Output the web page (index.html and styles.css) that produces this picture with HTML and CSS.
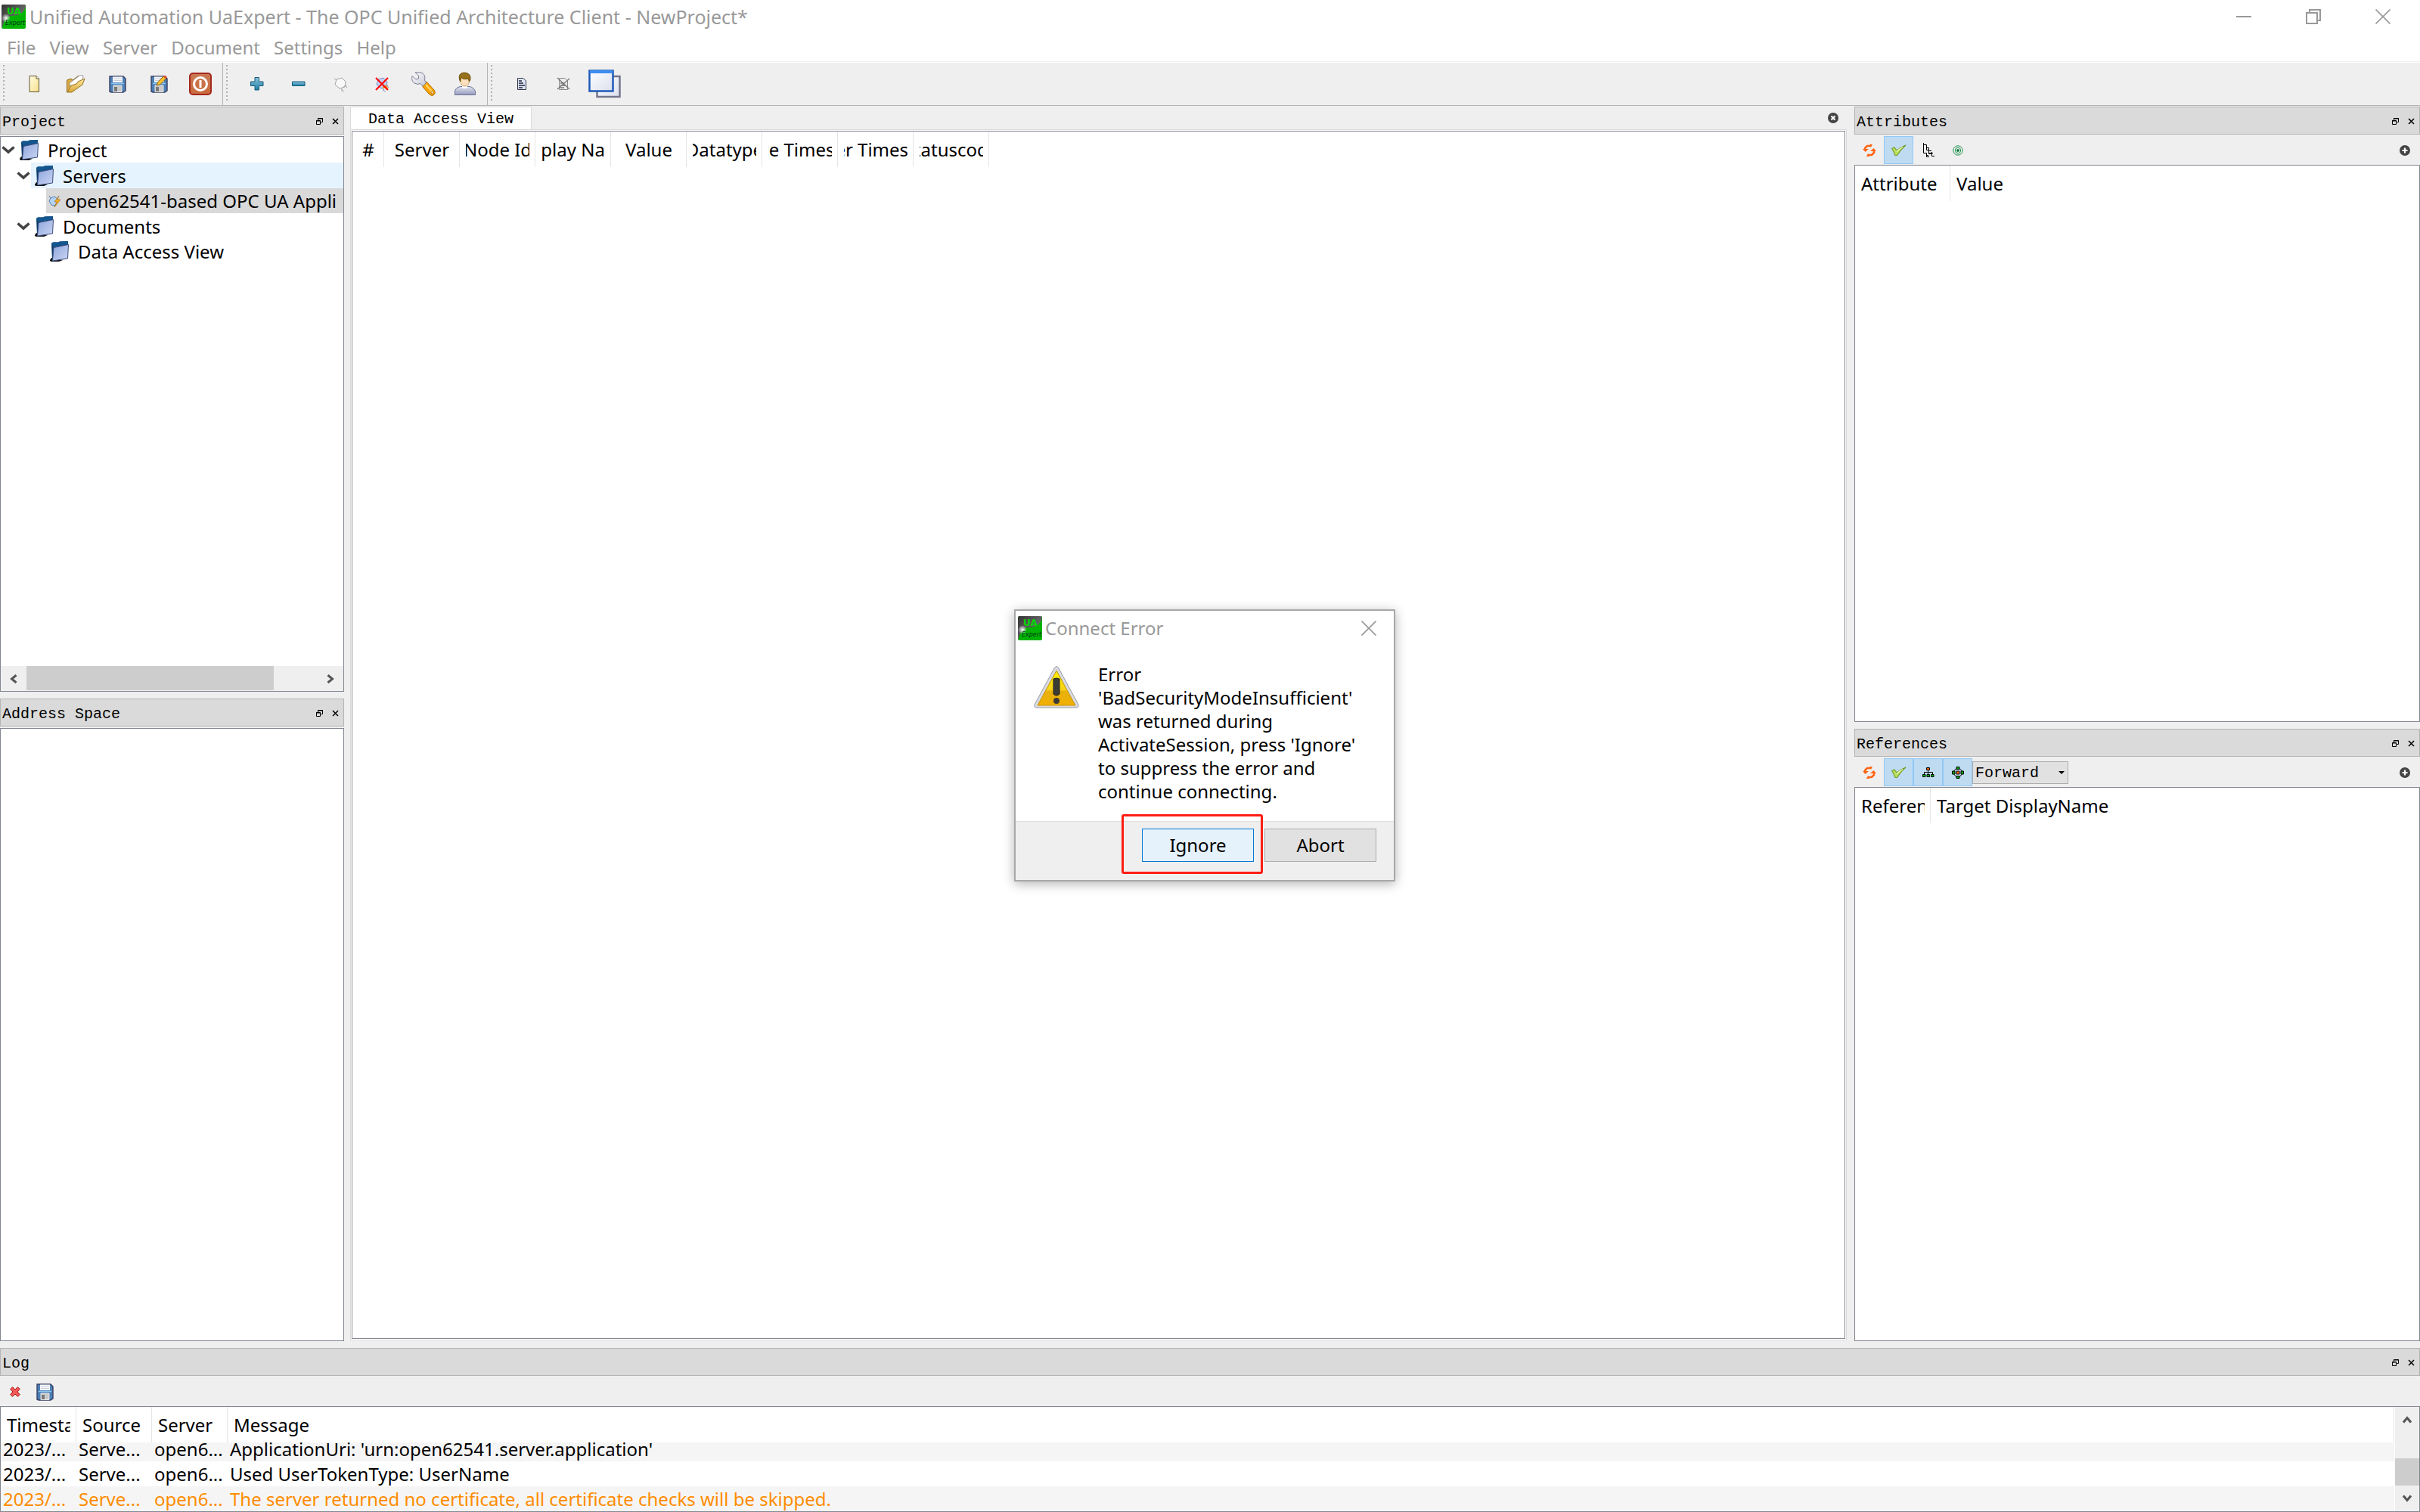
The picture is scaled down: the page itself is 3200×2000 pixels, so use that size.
FILE: index.html
```html
<!DOCTYPE html>
<html lang="en">
<head>
<meta charset="utf-8">
<title>Unified Automation UaExpert - The OPC Unified Architecture Client - NewProject*</title>
<link rel="stylesheet" href="styles.css">
</head>
<body>
<svg class="defs" aria-hidden="true">
  <defs>
    <linearGradient id="g-folder" x1="0" y1="0" x2="1" y2="1"><stop offset="0" stop-color="#8ea5dd"/><stop offset="1" stop-color="#ccd6f2"/></linearGradient>
    <linearGradient id="g-grey" x1="0" y1="0" x2="1" y2="1"><stop offset="0" stop-color="#333"/><stop offset="1" stop-color="#8a8a8a"/></linearGradient>
    <radialGradient id="g-flare"><stop offset="0" stop-color="#fff"/><stop offset="1" stop-color="#fff" stop-opacity="0"/></radialGradient>
    <linearGradient id="g-page" x1="0" y1="0" x2="1" y2="1"><stop offset="0" stop-color="#fffbe0"/><stop offset="1" stop-color="#f8e08c"/></linearGradient>
    <linearGradient id="g-gold" x1="0" y1="0" x2="0" y2="1"><stop offset="0" stop-color="#fbe9a0"/><stop offset="1" stop-color="#d9a63a"/></linearGradient>
    <linearGradient id="g-blue" x1="0" y1="0" x2="0" y2="1"><stop offset="0" stop-color="#8cc3dc"/><stop offset="1" stop-color="#1f7fa6"/></linearGradient>
    <linearGradient id="g-power" x1="0" y1="0" x2="0" y2="1"><stop offset="0" stop-color="#cb7a55"/><stop offset="1" stop-color="#c96a3c"/></linearGradient>
    <linearGradient id="g-steel" x1="0" y1="0" x2="1" y2="1"><stop offset="0" stop-color="#fff"/><stop offset="1" stop-color="#c4c6d6"/></linearGradient>
    <linearGradient id="g-body" x1="0" y1="0" x2="0" y2="1"><stop offset="0" stop-color="#e4e6f2"/><stop offset="1" stop-color="#9499bd"/></linearGradient>
    <linearGradient id="g-warn" x1="0" y1="0" x2="0" y2="1"><stop offset="0" stop-color="#fff100"/><stop offset=".55" stop-color="#f6d21c"/><stop offset=".6" stop-color="#e9b10e"/><stop offset="1" stop-color="#f0b000"/></linearGradient>
    <linearGradient id="g-win" x1="0" y1="0" x2="1" y2="1"><stop offset="0" stop-color="#fff"/><stop offset="1" stop-color="#dcdfee"/></linearGradient>
    <symbol id="i-app" viewBox="0 0 32 32">
      <rect width="32" height="32" rx="2" fill="#00b400"/>
      <path d="M0 2Q0 0 2 0H30Q32 0 32 2C30 11 24 15 12 15C6 17 3 22 1 30L0 31Z" fill="url(#g-grey)"/>
      <circle cx="6" cy="18" r="6" fill="url(#g-flare)"/>
      <text x="7" y="13" class="logo-ua">UA</text>
      <text x="5" y="27" class="logo-ex">Expert</text>
    </symbol>
    <symbol id="i-folder" viewBox="0 0 26 28">
      <path d="M2 22L17 25L12 27H2Q-1 26 0 25Z" fill="#111"/>
      <path d="M2 3L4 1.500H11L13 .500L24 0V5L22 23L3 25Z" fill="#0b3c6b"/>
      <path d="M2 3L4 1.500H11L13 .500L24 0V4L5 8Z" fill="#14568f"/>
      <path d="M5 8.500L24.500 4.500L23.500 23L3.500 26Z" fill="url(#g-folder)" stroke="#3c4f80" stroke-width="1"/>
    </symbol>
    <symbol id="i-save" viewBox="0 0 32 32">
      <path d="M6 6H24L27 9V25L24 27H8L6 26Z" fill="#4b7fb5" stroke="#3a3f63" stroke-width="1.4"/>
      <path d="M10 6.500H23V14H10Z" fill="#f6f7fa"/><path d="M11 9H22M11 11.500H22" stroke="#c9ccd6"/>
      <path d="M8 15.500H25" stroke="#8cc6ef" stroke-width="1.500"/>
      <path d="M11 18H22V26.500H11Z" fill="#c9c9c9" stroke="#e8e8e8"/><path d="M12 20H16V26H12Z" fill="#777"/>
    </symbol>
    <symbol id="i-plug" viewBox="0 0 32 32">
      <path d="M11 10L18 8L23 13L22 20L15 22L9 17Z"/><path d="M11 11L8 9M20 20L24 18M17 22L19 24M23 18L25 21M17 24L21 26"/>
    </symbol>
    <symbol id="i-float" viewBox="0 0 9 9"><path d="M2.500 3V.500H8.500V5.500H6.500M2 1H9" fill="none" stroke="#000"/><path d="M.500 3.500H5.500V8.500H.500ZM0 4H6" fill="none" stroke="#000"/></symbol>
    <symbol id="i-x" viewBox="0 0 9 9"><path d="M1 1L8 8M8 1L1 8" stroke="#000" stroke-width="1.500"/></symbol>
    <symbol id="i-close" viewBox="0 0 20 20"><path d="M.500 .500L19.500 19.500M19.500 .500L.500 19.500" stroke="#999" stroke-width="1.600"/></symbol>
    <symbol id="i-refresh" viewBox="0 0 18 16"><path d="M3 7V5L6 2H11M15 9V11L12 14H7" fill="none" stroke="#ff6414" stroke-width="2.600"/><path d="M0 6H8L3.500 10ZM18 9H10L14.500 5Z" fill="#ff6414"/><path d="M9 0H13L11 4ZM9 16H5L7 12Z" fill="#ff6414"/></symbol>
    <symbol id="i-check" viewBox="0 0 20 16"><path d="M.700 5.500L4 4L7 8Q12 4 19 1Q12 7 7.500 14.500H5Q3 9 .700 5.500Z" fill="#bce05a" stroke="#749c2c" stroke-width="1.200"/><path d="M7 9.500Q11 5.500 15 3.500" stroke="#eefac0" stroke-width="1.300" fill="none"/></symbol>
    <symbol id="i-plus" viewBox="0 0 14 14"><circle cx="7" cy="7" r="7" fill="#444"/><path d="M7 3.500V10.500M3.500 7H10.500" stroke="#fff" stroke-width="2.200"/></symbol>
    <symbol id="i-down" viewBox="0 0 18 12"><path d="M1.500 2.500L9 9L16.500 2.500" fill="none" stroke="#444" stroke-width="3.600"/></symbol>
  </defs>
</svg>

<div class="app">
  <header class="titlebar">
    <svg class="app-icon"><use href="#i-app"/></svg>
    <h1 class="title">Unified Automation UaExpert - The OPC Unified Architecture Client - NewProject*</h1>
    <div class="window-buttons">
      <button type="button" aria-label="Minimize"><svg width="20" height="20" viewBox="0 0 20 20"><path d="M0 10H20" stroke="#999" stroke-width="2"/></svg></button>
      <button type="button" aria-label="Restore"><svg width="20" height="20" viewBox="0 0 20 20"><path d="M1 5H15V19H1ZM5 5V1H19V15H15" fill="none" stroke="#999" stroke-width="2"/></svg></button>
      <button type="button" aria-label="Close"><svg width="20" height="20"><use href="#i-close"/></svg></button>
    </div>
  </header>

  <nav class="menubar">
    <button type="button">File</button><button type="button">View</button><button type="button">Server</button><button type="button">Document</button><button type="button">Settings</button><button type="button">Help</button>
  </nav>

  <div class="toolbar">
    <div class="tool-group">
      <button type="button" aria-label="New"><svg class="i32" viewBox="0 0 32 32"><path d="M10 5.500H19L22.500 9V26.500H10Z" fill="url(#g-page)" stroke="#5f5630"/><path d="M19 5.500V9H22.500" fill="#fff" stroke="#5f5630"/></svg></button>
      <button type="button" aria-label="Open"><svg class="i32" viewBox="0 0 32 32"><path d="M4.500 27V11L10 9L12 11L20 5L24 9V17Z" fill="#d8ab45" stroke="#8c6b20"/><path d="M8 15L21 5H26L25 14L9 22Z" fill="#fff" stroke="#999"/><path d="M5 27L10 18L17 16L19 13L28 9L25 17L11 27Z" fill="url(#g-gold)" stroke="#9a7421"/></svg></button>
      <button type="button" aria-label="Save"><svg class="i32"><use href="#i-save"/></svg></button>
      <button type="button" aria-label="Save as"><svg class="i32" viewBox="0 0 32 32"><use href="#i-save" width="32" height="32"/><path d="M13 18L14.500 14L22 6L25.500 9L17.500 17Z" fill="#fbc02d" stroke="#8a5a12"/><path d="M22 6L24 4.500L27 7L25.500 9Z" fill="#e0533d"/></svg></button>
      <button type="button" aria-label="Exit"><svg class="i32" viewBox="0 0 32 32"><rect x="2" y="2" width="28" height="28" rx="4" fill="url(#g-power)" stroke="#a5281b" stroke-width="2"/><circle cx="16" cy="16" r="8.500" fill="none" stroke="#fff" stroke-width="3"/><path d="M16 11V21" stroke="#fff" stroke-width="3"/></svg></button>
    </div>
    <div class="tool-group">
      <button type="button" aria-label="Add server"><svg class="i32" viewBox="0 0 32 32"><path d="M13 7.500H18.500V13H24V18.500H18.500V24H13V18.500H7.500V13H13Z" fill="url(#g-blue)" stroke="#145a7c" stroke-linejoin="round"/></svg></button>
      <button type="button" aria-label="Remove server"><svg class="i32" viewBox="0 0 32 32"><path d="M7.500 13H24V18.500H7.500Z" fill="url(#g-blue)" stroke="#145a7c" stroke-linejoin="round"/></svg></button>
      <button type="button" aria-label="Connect server"><svg class="i32 plug-off"><use href="#i-plug"/></svg></button>
      <button type="button" aria-label="Disconnect server"><svg class="i32" viewBox="0 0 32 32"><g class="plug-on"><use href="#i-plug" width="32" height="32"/></g><path d="M17 21L21 19L23 23" fill="none" stroke="#f5a030" stroke-width="3"/><path d="M8 8L24 24M24 8L8 24" stroke="#f00" stroke-width="2"/></svg></button>
      <button type="button" aria-label="Properties"><svg class="i32" viewBox="0 0 32 32"><path d="M15.500 15L20 13L30 24Q33 28 29 31Q26 32.500 23 29L15 20Z" fill="#f8a400" stroke="#b06c00"/><path d="M19 17L28 27" stroke="#ffd56b" stroke-width="2"/><path d="M9 .700L5 .700L9.500 5V9L6 10L1 5.500Q-.500 12 4 15Q8 17.500 12 15.500L15 19L19.500 14.500L17.500 11Q19 5 15 2Q12 0 9 .700Z" fill="url(#g-steel)" stroke="#7d8094"/><circle cx="27.500" cy="27.500" r="1.500" fill="#fff" stroke="#b06c00"/></svg></button>
      <button type="button" aria-label="Change user"><svg class="i32" viewBox="0 0 32 32"><path d="M2.500 30.500V26Q3 21 10 19.500H22Q28 21 29.500 26V30.500Z" fill="url(#g-body)" stroke="#6c7094"/><path d="M12 17H19V21Q15.500 23 12 21Z" fill="#fff"/><path d="M10 8V13Q11 19 15.500 19Q20 19 21.500 13V8Z" fill="#fde0bd" stroke="#cda06c"/><path d="M8.500 10Q6.500 1.500 15 1Q24 1.500 23 10L21.500 13L20 9Q13 11 11 7L9.500 13Z" fill="#96701a" stroke="#6e4f0d"/></svg></button>
    </div>
    <div class="tool-group">
      <button type="button" aria-label="New document"><svg class="i32" viewBox="0 0 32 32"><path d="M10.500 8.500H18L21.500 12V23.500H10.500Z" fill="#dce8fa" stroke="#334"/><path d="M12 12H16M12 15H18M12 18H20M12 21H17" stroke="#223" stroke-width="1.300"/></svg></button>
      <button type="button" aria-label="Close document"><svg class="i32" viewBox="0 0 32 32"><path d="M10.500 8.500H18L21.500 12V23.500H10.500Z" fill="#eee" stroke="#888"/><path d="M12 15H18M12 18H20M12 21H17M8 8L24 23M24 9L8 23" stroke="#777" stroke-width="1.300"/></svg></button>
      <button type="button" aria-label="Windows"><svg width="44" height="38" viewBox="0 0 44 38"><rect x="11.500" y="9" width="30" height="27" fill="url(#g-win)" stroke="#73768c" stroke-width="2.500"/><rect x="1.500" y="1.500" width="31" height="27" fill="url(#g-win)" stroke="#1d5bb8" stroke-width="2.500"/><path d="M2 3H32" stroke="#3f8df0" stroke-width="4"/></svg></button>
    </div>
  </div>

  <main class="workspace">
    <div class="column">
      <section class="dock dock-project">
        <div class="dock-title"><h2>Project</h2><button type="button" aria-label="Float"><svg><use href="#i-float"/></svg></button><button type="button" aria-label="Close"><svg><use href="#i-x"/></svg></button></div>
        <div class="view tree-view">
          <ul class="tree">
            <li class="lv1"><svg class="chev"><use href="#i-down"/></svg><div class="node"><svg class="folder"><use href="#i-folder"/></svg><span>Project</span></div></li>
            <li class="lv2"><svg class="chev"><use href="#i-down"/></svg><div class="node hover"><svg class="folder"><use href="#i-folder"/></svg><span>Servers</span></div></li>
            <li class="lv3"><div class="node selected"><svg class="server" viewBox="0 0 18 18"><path d="M2 2L4 5L9 3L13 6V11L9 15L5 14L2 9L4 5" fill="#b5d4f5" stroke="#5580b8"/><path d="M15 2L9 10H12L9 17L17 7H13Z" fill="#ffb01f" stroke="#8a5a20" stroke-width=".600"/></svg><span>open62541-based OPC UA Appli</span></div></li>
            <li class="lv2"><svg class="chev"><use href="#i-down"/></svg><div class="node"><svg class="folder"><use href="#i-folder"/></svg><span>Documents</span></div></li>
            <li class="lv3"><div class="node"><svg class="folder"><use href="#i-folder"/></svg><span>Data Access View</span></div></li>
          </ul>
          <div class="hscroll">
            <button type="button" aria-label="Scroll left"><svg width="10" height="12" viewBox="0 0 10 12"><path d="M8.500 1L2.500 6L8.500 11" fill="none" stroke="#555" stroke-width="3"/></svg></button>
            <div class="htrack"><div class="hthumb"></div></div>
            <button type="button" aria-label="Scroll right"><svg width="10" height="12" viewBox="0 0 10 12"><path d="M1.500 1L7.500 6L1.500 11" fill="none" stroke="#555" stroke-width="3"/></svg></button>
          </div>
        </div>
      </section>
      <section class="dock dock-address">
        <div class="dock-title"><h2>Address Space</h2><button type="button" aria-label="Float"><svg><use href="#i-float"/></svg></button><button type="button" aria-label="Close"><svg><use href="#i-x"/></svg></button></div>
        <div class="view"></div>
      </section>
    </div>

    <section class="documents">
      <div class="tabs">
        <button type="button" class="tab">Data Access View</button>
        <button type="button" class="tab-close" aria-label="Close tab"><svg width="14" height="14" viewBox="0 0 14 14"><circle cx="7" cy="7" r="7" fill="#444"/><path d="M4.500 4.500L9.500 9.500M9.500 4.500L4.500 9.500" stroke="#fff" stroke-width="2.200"/></svg></button>
      </div>
      <div class="pane">
        <div class="view">
          <table class="grid grid-data">
            <colgroup><col class="c-num"><col class="c-std"><col class="c-std"><col class="c-std"><col class="c-std"><col class="c-std"><col class="c-std"><col class="c-std"><col class="c-std"><col></colgroup>
            <thead><tr>
              <th><div>#</div></th><th><div>Server</div></th><th><div>Node Id</div></th><th><div>Display Name</div></th><th><div>Value</div></th><th><div>Datatype</div></th><th><div>Source Timestamp</div></th><th><div>Server Timestamp</div></th><th><div>Statuscode</div></th><td></td>
            </tr></thead>
          </table>
        </div>
      </div>
    </section>

    <div class="column">
      <section class="dock dock-attributes">
        <div class="dock-title"><h2>Attributes</h2><button type="button" aria-label="Float"><svg><use href="#i-float"/></svg></button><button type="button" aria-label="Close"><svg><use href="#i-x"/></svg></button></div>
        <div class="subbar">
          <button type="button" aria-label="Refresh"><svg width="18" height="16"><use href="#i-refresh"/></svg></button>
          <button type="button" class="on" aria-label="Auto update"><svg width="20" height="16"><use href="#i-check"/></svg></button>
          <button type="button" aria-label="Expand"><svg width="16" height="20" viewBox="0 0 16 20" fill="none" stroke="#000"><path d="M1.500 0V13.500H5M1.500 2.500H5.500V9.500H9M5.500 6.500H8.500V14.500H12M8.500 10.500H12M5.500 13V18.500H9M12.500 12V17.500H16M5 16.500H8M9 13.500H14"/></svg></button>
          <button type="button" aria-label="Target"><svg width="14" height="14" viewBox="0 0 14 14" fill="none" stroke="#1d9150"><circle cx="7" cy="7" r="6.200"/><circle cx="7" cy="7" r="3.700"/><circle cx="7" cy="7" r="1.500" fill="#0a6b34"/></svg></button>
          <button type="button" class="more" aria-label="Add"><svg width="14" height="14"><use href="#i-plus"/></svg></button>
        </div>
        <div class="view">
          <table class="grid grid-left">
            <colgroup><col class="c-attr"><col></colgroup>
            <thead><tr><th><div>Attribute</div></th><th><div>Value</div></th></tr></thead>
          </table>
        </div>
      </section>
      <section class="dock dock-references">
        <div class="dock-title"><h2>References</h2><button type="button" aria-label="Float"><svg><use href="#i-float"/></svg></button><button type="button" aria-label="Close"><svg><use href="#i-x"/></svg></button></div>
        <div class="subbar">
          <button type="button" aria-label="Refresh"><svg width="18" height="16"><use href="#i-refresh"/></svg></button>
          <button type="button" class="on" aria-label="Auto update"><svg width="20" height="16"><use href="#i-check"/></svg></button>
          <button type="button" class="on" aria-label="Hierarchical"><svg width="16" height="16" viewBox="0 0 16 16" stroke="#000"><path d="M7.500 4V10M2.500 10V7.500H13.500V10" fill="none"/><path d="M5.500 1.500H9.500V4.500H5.500Z" fill="#ff6414"/><path d="M.500 10.500H4V13.500H.500ZM6 10.500H9.500V13.500H6ZM11.500 10.500H15V13.500H11.500Z" fill="#0b0"/></svg></button>
          <button type="button" class="on" aria-label="Non hierarchical"><svg width="16" height="16" viewBox="0 0 16 16" stroke="#000"><circle cx="8" cy="8" r="5.500" fill="none"/><path d="M6 .500H10V3.500H6ZM6 12.500H10V15.500H6ZM.500 6H4V10H.500ZM12 6H15.500V10H12Z" fill="#0a0"/><path d="M6 6H10V10H6Z" fill="#ff6414"/></svg></button>
          <div class="combo"><select aria-label="Direction"><option>Forward</option><option>Inverse</option><option>Both</option></select></div>
          <button type="button" class="more" aria-label="Add"><svg width="14" height="14"><use href="#i-plus"/></svg></button>
        </div>
        <div class="view">
          <table class="grid grid-left">
            <colgroup><col class="c-std"><col></colgroup>
            <thead><tr><th><div>Reference</div></th><th><div>Target DisplayName</div></th></tr></thead>
          </table>
        </div>
      </section>
    </div>
  </main>

  <section class="dock dock-log">
    <div class="dock-title"><h2>Log</h2><button type="button" aria-label="Float"><svg><use href="#i-float"/></svg></button><button type="button" aria-label="Close"><svg><use href="#i-x"/></svg></button></div>
    <div class="subbar">
      <button type="button" aria-label="Clear log"><svg width="14" height="14" viewBox="0 0 14 14"><path d="M3.500 .700L7 4L10.500 .700L13.300 3.500L10 7L13.300 10.500L10.500 13.300L7 10L3.500 13.300L.700 10.500L4 7L.700 3.500Z" fill="#f25a5a" stroke="#a81414"/></svg></button>
      <button type="button" aria-label="Save log"><svg class="i32"><use href="#i-save"/></svg></button>
    </div>
    <div class="view log-view">
      <table class="grid grid-left grid-log">
        <colgroup><col class="c-std"><col class="c-std"><col class="c-std"><col></colgroup>
        <thead><tr><th><div>Timestamp</div></th><th><div>Source</div></th><th><div>Server</div></th><th><div>Message</div></th></tr></thead>
        <tbody>
          <tr class="alt partial"><td>2023/...</td><td>Serve...</td><td>open6...</td><td>ApplicationUri: 'urn:open62541.server.application'</td></tr>
          <tr><td>2023/...</td><td>Serve...</td><td>open6...</td><td>Used UserTokenType: UserName</td></tr>
          <tr class="alt warn"><td>2023/...</td><td>Serve...</td><td>open6...</td><td>The server returned no certificate, all certificate checks will be skipped.</td></tr>
        </tbody>
      </table>
      <div class="vscroll">
        <button type="button" aria-label="Scroll up"><svg width="12" height="10" viewBox="0 0 12 10"><path d="M1 8.500L6 2.500L11 8.500" fill="none" stroke="#555" stroke-width="3"/></svg></button>
        <div class="vtrack"><div class="vthumb"></div></div>
        <button type="button" aria-label="Scroll down"><svg width="12" height="10" viewBox="0 0 12 10"><path d="M1 1.500L6 7.500L11 1.500" fill="none" stroke="#555" stroke-width="3"/></svg></button>
      </div>
    </div>
  </section>
</div>

<div class="dialog" role="dialog" aria-labelledby="dlg-title">
  <div class="dialog-title">
    <svg class="app-icon"><use href="#i-app"/></svg>
    <h2 id="dlg-title">Connect Error</h2>
    <button type="button" aria-label="Close"><svg width="20" height="20"><use href="#i-close"/></svg></button>
  </div>
  <div class="dialog-body">
    <svg class="warning" viewBox="0 0 62 58"><path d="M28 4Q31 -1 34 4L60 52Q61 56 57 56H5Q1 56 2 52Z" fill="#d9dbe0" stroke="#9b9da3"/><path d="M31 7L56 53H6Z" fill="url(#g-warn)" stroke="#c99300"/><path d="M27 18Q31 16 35 18V38Q31 42 27 38Z" fill="#3c3c34" stroke="#222"/><circle cx="31" cy="47" r="4" fill="#3c3c34"/></svg>
    <p>Error<br>'BadSecurityModeInsufficient'<br>was returned during<br>ActivateSession, press 'Ignore'<br>to suppress the error and<br>continue connecting.</p>
  </div>
  <div class="dialog-footer">
    <div class="marked"><button type="button" class="push default">Ignore</button><span class="marker"></span></div>
    <button type="button" class="push">Abort</button>
  </div>
</div>
</body>
</html>
```
FILE: styles.css
```css
* { box-sizing: border-box; }

body {
  margin: 0;
  font: 24px/32px "Noto Sans", "Open Sans", sans-serif;
  color: #000;
  background: #efefef;
}

h1, h2, p, ul { margin: 0; padding: 0; font: inherit; }
ul { list-style: none; }

button {
  padding: 0;
  border: 0;
  background: none;
  font: inherit;
  color: inherit;
  display: flex;
  align-items: center;
  justify-content: center;
}

svg { display: block; flex: none; }
.defs { position: absolute; width: 0; height: 0; }
.i32 { width: 32px; height: 32px; }
.app-icon { width: 32px; height: 32px; }
.logo-ua { font: bold 12px "DejaVu Sans", sans-serif; fill: #00d800; }
.logo-ex { font: italic 8px "DejaVu Sans", sans-serif; fill: #032; }
.plug-off { fill: #f8f8f8; stroke: #a4a4a4; }
.plug-on { fill: #c4d2f4; stroke: #7d8fc8; }

.app { display: flex; flex-direction: column; height: 100vh; }

/* Title bar and menus */
.titlebar {
  display: flex;
  align-items: center;
  height: 44px;
  padding: 0 3px 0 2px;
  background: #fff;
  color: #999;
}
.title { flex: 1; padding-left: 5px; font-size: 25px; white-space: nowrap; }
.window-buttons { display: flex; }
.window-buttons button { width: 92px; height: 44px; }

.menubar {
  display: flex;
  height: 38px;
  background: #fff;
  border-bottom: 1px solid #efefef;
  color: #999;
}
.menubar button { padding: 0 9px; }

/* Main toolbar */
.toolbar {
  display: flex;
  height: 58px;
  border-top: 1px solid #fff;
  border-bottom: 1px solid #b4b4b4;
}
.tool-group {
  display: flex;
  padding: 0 2px 0 17px;
  border-right: 1px solid #b4b4b4;
  background: repeating-linear-gradient(#b0b0b0 0 2px, transparent 2px 5px) 4px 3px / 2px 50px no-repeat;
}
.tool-group:last-child { border-right: 0; }
.tool-group button { width: 55px; }

/* Docks */
.workspace {
  flex: 1;
  min-height: 0;
  display: grid;
  grid-template-columns: 455px minmax(0, 1fr) 748px;
  column-gap: 8px;
  padding: 1px 0 9px;
}
.column { display: flex; flex-direction: column; gap: 9px; min-height: 0; }
.dock { display: flex; flex-direction: column; min-height: 0; }
.dock-project { flex: 774 0 0; }
.dock-address { flex: 850 0 0; }
.dock-attributes { flex: 814 0 0; }
.dock-references { flex: 810 0 0; }
.dock-log { height: 217px; }

.dock-title {
  display: flex;
  align-items: center;
  height: 37px;
  flex: none;
  padding-left: 2px;
  border: 1px solid #b4b4b4;
  background: #dadada;
  font: 20px/32px "Liberation Mono", monospace;
}
.dock-title h2 { flex: 1; padding-top: 4px; }
.dock-title button { width: 21px; height: 32px; padding-top: 2px; }
.dock-title svg { width: 9px; height: 9px; }

.view {
  flex: 1;
  min-height: 0;
  overflow: hidden;
  border: 1px solid #828790;
  background: #fff;
}
.dock-project .view, .dock-address .view { margin-top: 2px; }

.subbar { display: flex; align-items: center; height: 40px; padding: 1px 1px 0 0; flex: none; }
.subbar button { width: 39px; height: 37px; }
.subbar .on { background: #bfdbf2; border: 1px solid #90c8f6; }
.subbar .more { margin-left: auto; }

/* Project tree */
.tree-view { display: flex; flex-direction: column; }
.tree { flex: 1; overflow: hidden; }
.tree li { display: flex; height: 34px; align-items: center; }
.tree .lv3 { height: 33px; }
.chev { width: 18px; height: 12px; margin: 0 1px; }
.lv2 { padding-left: 20px; }
.lv3 { padding-left: 60px; }
.node { display: flex; align-items: center; flex: 1; height: 100%; padding-top: 1px; white-space: nowrap; }
.hover { background: #e5f3ff; }
.selected { background: #d9d9d9; }
.folder { width: 26px; height: 28px; margin: 0 11px 0 5px; }
.server { width: 18px; height: 18px; margin: 0 5px 0 2px; }

.hscroll { display: flex; height: 33px; background: #efefef; }
.hscroll button { width: 34px; }
.htrack { flex: 1; }
.hthumb { width: 85%; height: 32px; background: #cdcdcd; }

/* Document area */
.documents { display: flex; flex-direction: column; min-height: 0; margin-right: 2px; }
.tabs { display: flex; align-items: center; height: 30px; flex: none; }
.tab {
  height: 30px;
  padding: 3px 23px 0;
  border: 1px solid #dadada;
  border-bottom: 0;
  background: #fff;
  font: 20px/26px "Liberation Mono", monospace;
}
.tab-close { margin-left: auto; width: 36px; height: 30px; }
.pane {
  flex: 1;
  min-height: 0;
  display: flex;
  margin-bottom: 1px;
  padding: 1px;
  border: 1px solid #dadada;
  background: #fff;
}

/* Tables */
.grid { width: 100%; table-layout: fixed; border-collapse: separate; border-spacing: 0; }
.grid th { height: 47px; padding: 0 7px 0 8px; font-weight: 400; border-right: 1px solid #e5e5e5; }
.grid th div { display: flex; justify-content: center; overflow: hidden; white-space: nowrap; }
.grid-left th div { justify-content: flex-start; }
.grid-left th:last-child { border-right: 0; }
.c-num { width: 42px; }
.c-std { width: 100px; }
.c-attr { width: 126px; }

/* Direction drop-down */
.combo { position: relative; width: 127px; }
.combo select {
  appearance: none;
  display: block;
  width: 100%;
  height: 30px;
  padding: 2px 3px 0;
  border: 1px solid #adadad;
  border-radius: 0;
  background: #e1e1e1;
  color: #000;
  font: 20px/26px "Liberation Mono", monospace;
}
.combo::after {
  content: "";
  position: absolute;
  right: 5px;
  top: 13px;
  border: 4px solid transparent;
  border-top-color: #000;
}

/* Log */
.log-view { display: flex; }
.grid-log { flex: 1; align-self: flex-start; }
.grid-log th:last-child { border-right: 1px solid #e5e5e5; }
.grid-log td { height: 33px; padding: 0 4px 0 3px; line-height: 33px; white-space: nowrap; }
.grid-log .partial td { height: 25px; line-height: 17px; vertical-align: top; }
.alt td { background: #f5f5f5; }
.warn { color: #ff8c00; }
.vscroll { display: flex; flex-direction: column; width: 33px; border-left: 1px solid #fff; background: #efefef; }
.vscroll button { height: 34px; }
.vtrack { flex: 1; display: flex; flex-direction: column; justify-content: flex-end; }
.vthumb { height: 52%; background: #cdcdcd; }

/* Connect Error dialog */
.dialog {
  position: absolute;
  left: 1341px;
  top: 806px;
  width: 504px;
  border: 2px solid #a8a8a8;
  background: #fff;
  box-shadow: 0 3px 14px rgba(0, 0, 0, .3);
}
.dialog-title { display: flex; align-items: center; height: 46px; padding-left: 3px; color: #999; }
.dialog-title h2 { flex: 1; padding-left: 4px; }
.dialog-title button { width: 66px; height: 44px; }
.dialog-body { display: flex; gap: 23px; padding: 22px 20px 24px 22px; line-height: 31px; white-space: nowrap; }
.warning { width: 64px; height: 58px; margin-top: 4px; }
.dialog-footer {
  display: flex;
  gap: 14px;
  justify-content: flex-end;
  align-items: flex-start;
  height: 78px;
  padding: 9px 23px;
  border-top: 1px solid #dfdfdf;
  background: #efefef;
}
.push { width: 148px; height: 44px; border: 1px solid #adadad; background: #e1e1e1; }
.default { border-color: #0078d7; background: #e5f1fb; }
.marked { position: relative; }
.marker {
  position: absolute;
  inset: -19px -12px -16px -27px;
  border: 3px solid #ff1e14;
  border-radius: 3px;
  pointer-events: none;
}
```
